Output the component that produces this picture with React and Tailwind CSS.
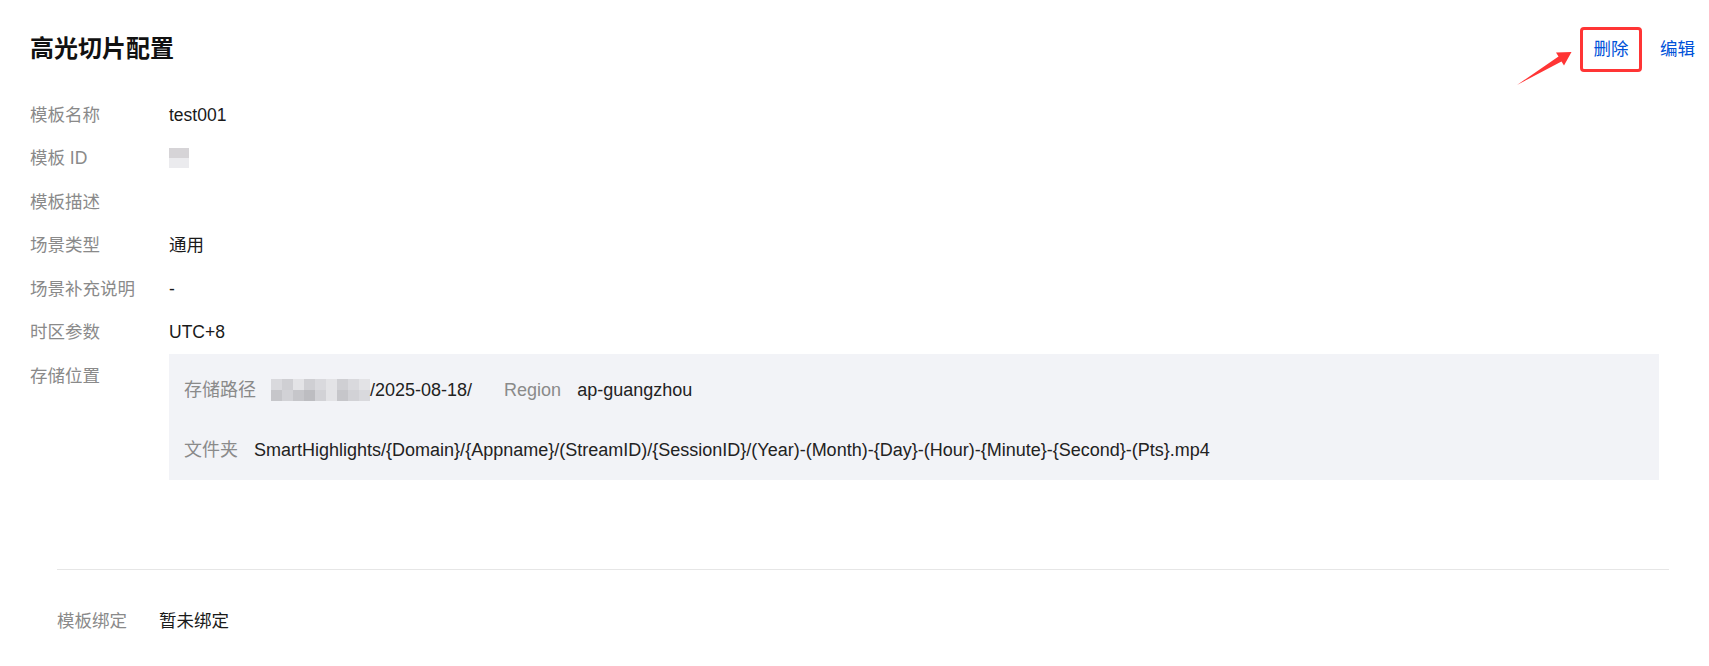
import React from "react";

const FONT = { fontFamily: '"Liberation Sans", Arial, "Noto Sans CJK SC", sans-serif' };

function Mosaic({ rows, cell, colors }) {
  return (
    <div className="flex flex-col">
      {rows.map((r, i) => (
        <div key={i} className="flex">
          {r.map((c, j) => (
            <div key={j} style={{ width: cell[0], height: cell[1], background: colors[c] }} />
          ))}
        </div>
      ))}
    </div>
  );
}

const blurColors = ["#d9d9dd", "#cfcfd3", "#e3e3e6", "#c6c6ca", "#d2d2d6", "#bdbdc1"];

function Row({ label, children }) {
  return (
    <div className="flex h-[43.5px] items-center">
      <div className="w-[139px] shrink-0 text-[#8a8a8a]">{label}</div>
      <div className="text-[#1a1a1a]">{children}</div>
    </div>
  );
}

export default function App() {
  return (
    <div className="relative w-[1709px] h-[666px] bg-white text-[17.5px] overflow-hidden" style={FONT}>
      {/* header */}
      <div className="flex h-[93px] items-center justify-between pl-[30px] pr-[14px] pt-[5px]">
        <h1 className="text-[24px] font-bold text-[#111]">高光切片配置</h1>
        <div className="flex items-center gap-[18px] text-[#0052d9]">
          <div className="flex h-[45px] w-[62px] items-center justify-center rounded-[4px] border-[3px] border-[#ff3535]">
            删除
          </div>
          <span>编辑</span>
        </div>
      </div>

      {/* info rows */}
      <div className="flex flex-col pl-[30px]">
        <Row label="模板名称">test001</Row>
        <Row label="模板 ID">
          <div className="flex flex-col w-[20px]">
            <div className="h-[10px] bg-[#d6d4d7]" />
            <div className="h-[10px] bg-[#ebebee]" />
          </div>
        </Row>
        <Row label="模板描述"></Row>
        <Row label="场景类型">通用</Row>
        <Row label="场景补充说明">-</Row>
        <Row label="时区参数">UTC+8</Row>
        <div className="flex">
          <div className="flex h-[43.5px] w-[139px] shrink-0 items-center text-[#8a8a8a]">存储位置</div>
          <div className="flex h-[126px] w-[1490px] flex-col gap-[20px] bg-[#f2f3f7] pl-[15px] pt-[16px] pb-[10px] text-[18px]">
            <div className="flex h-[40px] items-center">
              <span className="text-[#8a8a8a]">存储路径</span>
              <div className="ml-[15px]">
                <Mosaic
                  cell={[11, 11]}
                  colors={blurColors}
                  rows={[
                    [0, 1, 2, 1, 0, 2, 1, 0, 2],
                    [3, 4, 3, 5, 4, 2, 3, 4, 0],
                  ]}
                />
              </div>
              <span className="text-[#222]">/2025-08-18/</span>
              <span className="ml-[32px] text-[#8a8a8a]">Region</span>
              <span className="ml-[16px] text-[#222]">ap-guangzhou</span>
            </div>
            <div className="flex h-[40px] items-center">
              <span className="text-[#8a8a8a]">文件夹</span>
              <span className="ml-[16px] text-[#222]">
                SmartHighlights/{"{Domain}"}/{"{Appname}"}/(StreamID)/{"{SessionID}"}/(Year)-(Month)-{"{Day}"}-(Hour)-{"{Minute}"}-{"{Second}"}-(Pts}.mp4
              </span>
            </div>
          </div>
        </div>
      </div>

      {/* binding section */}
      <div className="ml-[57px] mr-[40px] mt-[89px] border-t border-[#e6e6e6]">
        <div className="flex h-[103px] items-center">
          <div className="w-[102px] shrink-0 text-[#8a8a8a]">模板绑定</div>
          <div className="text-[#1a1a1a]">暂未绑定</div>
        </div>
      </div>

      {/* annotation arrow */}
      <svg className="absolute left-[1510px] top-[48px]" width="65" height="42" viewBox="0 0 65 42">
        <polygon points="7,37 48.5,8.5 46,4.5 61.5,4 54,17.5 51.5,13.5" fill="#ff3535" />
      </svg>
    </div>
  );
}
